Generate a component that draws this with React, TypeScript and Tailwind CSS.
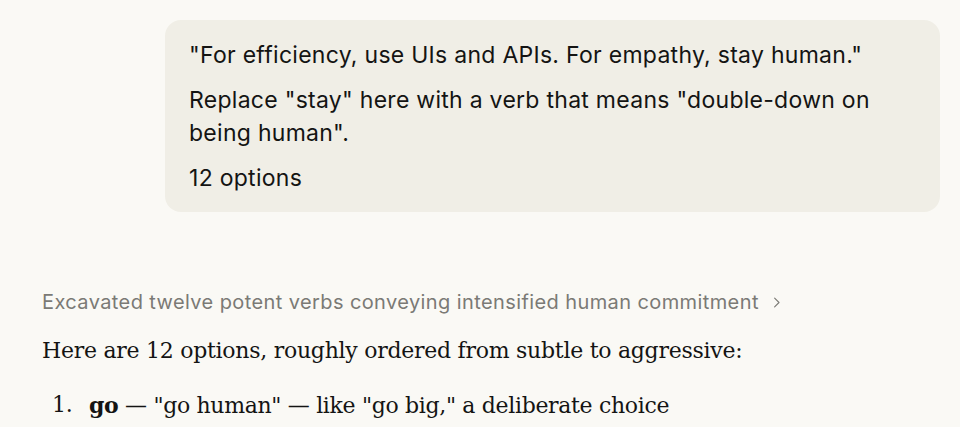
export default function App() {
  return (
    <div className="min-h-screen w-full bg-[#faf9f5] text-[#141413]">
      <div className="flex flex-col pt-5">
        <div className="ml-auto mr-5 w-[775px] rounded-2xl bg-[#f0eee6] px-6 pt-[19px] pb-[17px] font-['Inter',sans-serif] text-[23px] leading-[33px] tracking-[0.012em]">
          <p>"For efficiency, use UIs and APIs. For empathy, stay human."</p>
          <p className="mt-3">Replace "stay" here with a verb that means "double-down on being human".</p>
          <p className="mt-3">12 options</p>
        </div>

        <div className="mt-[76px] pl-[42px]">
          <button className="flex items-center gap-[10px] font-['Inter',sans-serif] text-[20px] leading-[28px] tracking-[0.02em] text-[#7b7a75]">
            <span>Excavated twelve potent verbs conveying intensified human commitment</span>
            <svg width="15" height="15" viewBox="0 0 24 24" fill="none" stroke="currentColor" strokeWidth="1.8" strokeLinecap="round" strokeLinejoin="round">
              <path d="M9 5l7 7-7 7" />
            </svg>
          </button>

          <p className="mt-[17px] font-['DejaVu_Serif',serif] text-[22px] leading-[36px] tracking-[-0.012em]">
            Here are 12 options, roughly ordered from subtle to aggressive:
          </p>

          <ol className="mt-[18px] font-['DejaVu_Serif',serif] text-[22px] leading-[36px] tracking-[-0.015em]">
            <li className="flex">
              <span className="w-[47px] pl-[10px]">1.</span>
              <span>
                <strong className="font-bold">go</strong> — "go human" — like "go big," a deliberate choice
              </span>
            </li>
          </ol>
        </div>
      </div>
    </div>
  );
}
